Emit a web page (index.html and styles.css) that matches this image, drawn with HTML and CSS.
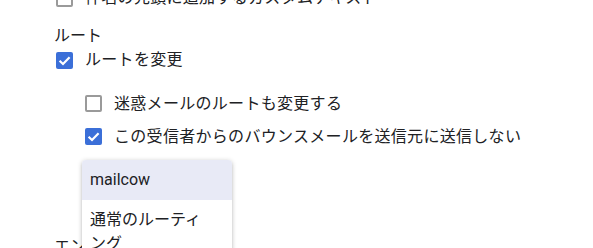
FILE: index.html
```html
<!DOCTYPE html>
<html lang="ja">
<head>
<meta charset="utf-8">
<link rel="stylesheet" href="styles.css">
</head>
<body>
<div class="page">
  <div class="row top">
    <span class="cb"></span>
    <span class="txt">件名の先頭に追加するカスタムテキスト</span>
  </div>
  <div class="label first">ルート</div>
  <div class="row">
    <span class="cb checked"><svg viewBox="0 0 17 17" width="17" height="17"><path d="M3.6 8.7 L7 12 L13.6 5.2" fill="none" stroke="#fff" stroke-width="2.2"/></svg></span>
    <span class="txt">ルートを変更</span>
  </div>
  <div class="nested">
    <div class="row tall">
      <span class="cb"></span>
      <span class="txt">迷惑メールのルートも変更する</span>
    </div>
    <div class="row tall">
      <span class="cb checked"><svg viewBox="0 0 17 17" width="17" height="17"><path d="M3.6 8.7 L7 12 L13.6 5.2" fill="none" stroke="#fff" stroke-width="2.2"/></svg></span>
      <span class="txt">この受信者からのバウンスメールを送信元に送信しない</span>
    </div>
    <div class="select-space"></div>
  </div>
  <div class="label">エンベロープ受信者</div>
  <div class="menu">
    <div class="item active">mailcow</div>
    <div class="item">通常のルーティング</div>
  </div>
</div>
</body>
</html>
```

FILE: styles.css
```css
html, body {
  margin: 0;
  padding: 0;
  background: #fff;
  overflow: hidden;
}
body {
  font-family: "Roboto", "Noto Sans CJK JP", sans-serif;
  font-size: 16px;
  color: #202124;
}
.page {
  position: relative;
  display: flow-root;
  padding-left: 54px;
  height: 248px;
  overflow: hidden;
}
.row {
  display: flex;
  align-items: center;
  height: 24px;
  padding-left: 2px;
  gap: 12px;
  line-height: 24px;
}
.row.top {
  margin-top: -14px;
}
.row.tall {
  height: 33px;
}
.label {
  line-height: 24px;
  height: 24px;
  white-space: nowrap;
}
.label.first {
  margin-top: 14px;
}
.nested {
  margin-top: 15px;
  padding-left: 29px;
}
.select-space {
  height: 82px;
}
.cb {
  box-sizing: border-box;
  width: 17px;
  height: 17px;
  flex: 0 0 17px;
  border: 2px solid #9a9a9a;
  border-radius: 2px;
  background: #fff;
  display: block;
}
.cb.checked {
  border: none;
  background: #3b6fd8;
}
.cb svg {
  display: block;
}
.txt {
  white-space: nowrap;
  letter-spacing: 0.3px;
}
.menu {
  position: absolute;
  left: 82px;
  top: 160px;
  width: 150px;
  bottom: -8px;
  background: #fff;
  border-radius: 4px;
  box-shadow: 0 1px 5px rgba(0, 0, 0, 0.22), 0 2px 3px rgba(0, 0, 0, 0.1);
  overflow: hidden;
}
.item {
  padding: 8px 16px 8px 8px;
  line-height: 24px;
}
.item.active {
  background: #e8eaf6;
}
```
